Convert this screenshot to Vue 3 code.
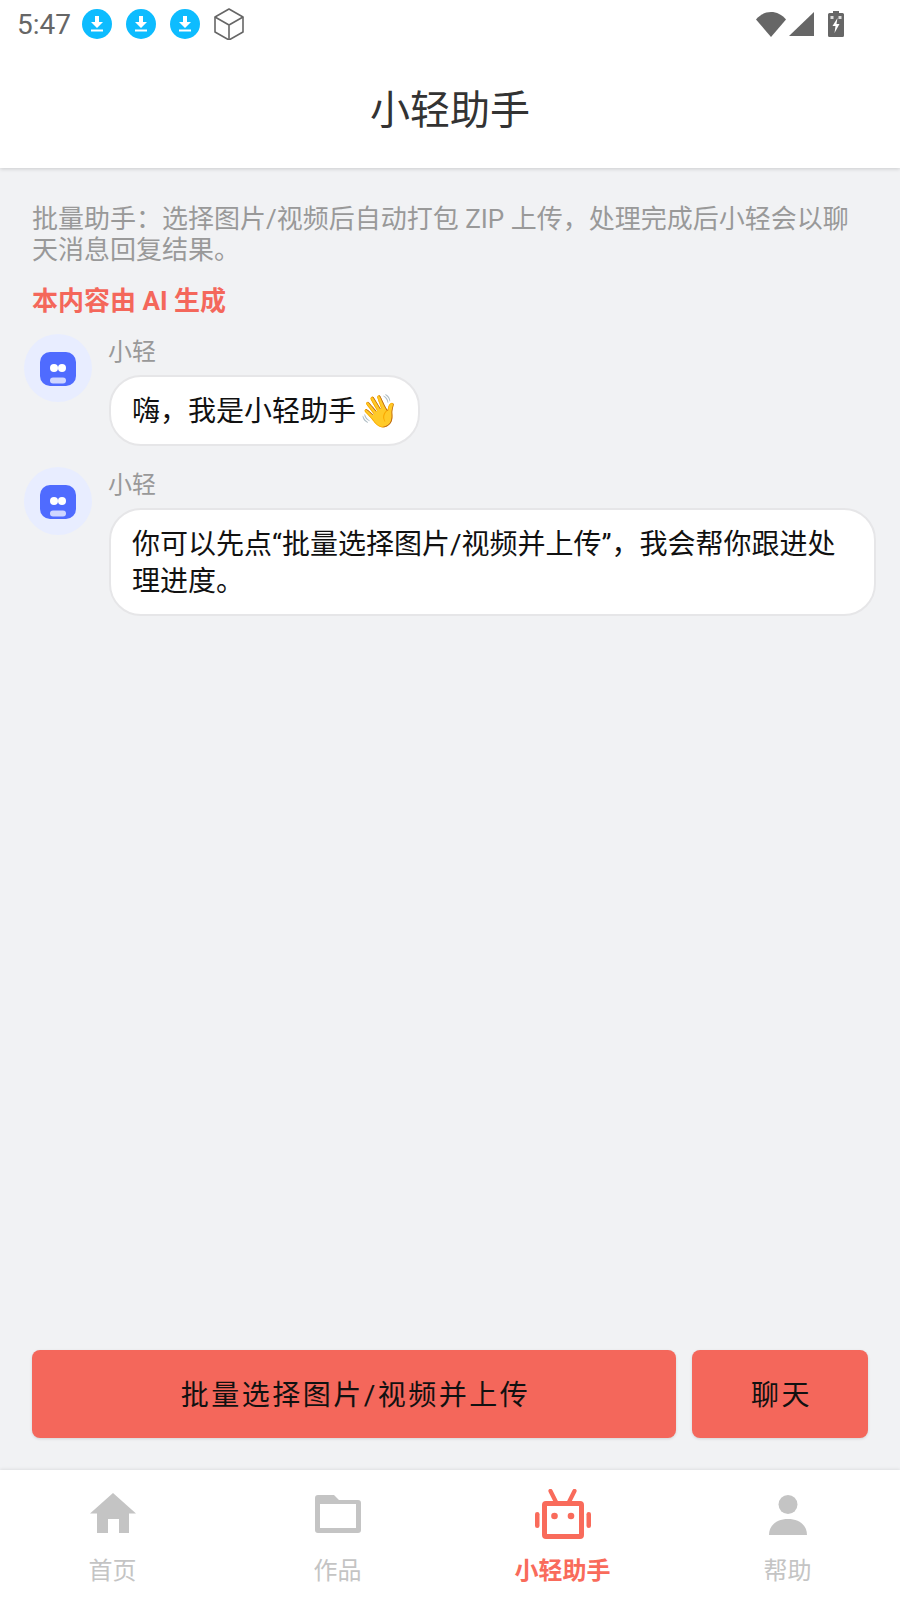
<script setup>
const messages = [
  { id: 1, text: '嗨，我是小轻助手 ', emoji: '👋' },
  { id: 2, text: '你可以先点“批量选择图片/视频并上传”，我会帮你跟进处理进度。', emoji: '' }
]
const downloads = [1, 2, 3]
</script>

<template>
  <div class="page">
    <div class="status">
      <span class="time">5:47</span>
      <svg v-for="d in downloads" :key="d" class="dl" viewBox="0 0 30 30">
        <circle cx="15" cy="15" r="15" fill="#0dbcff" />
        <path d="M13 7h4v6h4l-6 6-6-6h4z" fill="#fff" />
        <rect x="9" y="20.5" width="12" height="2" fill="#fff" />
      </svg>
      <svg class="cube" viewBox="0 0 30 32" fill="none" stroke="#666" stroke-width="1.6" stroke-linejoin="round">
        <path d="M15 1 29 9v15l-14 8-14-8V9z" />
        <path d="M1 9l14 8 14-8M15 17v15" />
      </svg>
      <span class="spacer"></span>
      <svg class="wifi" viewBox="0 0 30 25"><path d="M0 7.500C8-2.500 22-2.500 30 7.500L15 25z" fill="#666" /></svg>
      <svg class="signal" viewBox="0 0 25 24"><path d="M25 0v24H0z" fill="#666" /></svg>
      <svg class="battery" viewBox="0 0 16 26">
        <path d="M5 0h6v2h3.500a1.500 1.500 0 0 1 1.500 1.500v21a1.500 1.500 0 0 1-1.500 1.500h-13A1.500 1.500 0 0 1 0 24.500v-21A1.500 1.500 0 0 1 1.500 2H5z" fill="#666" />
        <path d="M9.500 7 4.500 15h3l-1 7 5-9h-3l1-6z" fill="#fff" />
        <rect x="2.500" y="5" width="3" height="3" fill="#ddd" />
        <rect x="10.500" y="5" width="3" height="3" fill="#ddd" />
      </svg>
    </div>

    <header class="header">小轻助手</header>

    <main class="main">
      <p class="intro">批量助手：选择图片/视频后自动打包 ZIP 上传，处理完成后小轻会以聊天消息回复结果。</p>
      <p class="notice">本内容由 AI 生成</p>

      <div class="list">
        <div v-for="m in messages" :key="m.id" class="msg">
          <div class="avatar">
            <svg viewBox="0 0 36 36" class="bot">
              <rect y="2" width="36" height="34" rx="10" fill="#4f6bff" />
              <circle cx="14" cy="18" r="4" fill="#fff" />
              <circle cx="22" cy="18" r="4" fill="#fff" />
              <rect x="10" y="27.500" width="16" height="6" rx="3" fill="#cfd6ff" />
            </svg>
          </div>
          <div class="body">
            <div class="name">小轻</div>
            <div class="bubble">{{ m.text }}<span v-if="m.emoji" class="emoji">{{ m.emoji }}</span></div>
          </div>
        </div>
      </div>

      <div class="actions">
        <button class="btn wide">批量选择图片/视频并上传</button>
        <button class="btn narrow">聊天</button>
      </div>
    </main>

    <nav class="tabs">
      <div class="tab">
        <svg class="ticon" viewBox="0 0 46 40"><path d="M23 0 46 20.500H39V40H29V26H18V40H7V20.500H0z" fill="#c4c4c4" /></svg>
        <span>首页</span>
      </div>
      <div class="tab">
        <svg class="ticon" viewBox="0 0 46 40"><path d="M3 2h16l5 5h19a3 3 0 0 1 3 3v27a3 3 0 0 1-3 3H3a3 3 0 0 1-3-3V5a3 3 0 0 1 3-3zm2 9v24h36V11z" fill="#c4c4c4" fill-rule="evenodd" /></svg>
        <span>作品</span>
      </div>
      <div class="tab active">
        <svg class="ticon" viewBox="0 0 56 50" fill="#f96b5b">
          <rect x="9.500" y="14.500" width="37" height="33" rx="1.500" fill="none" stroke="#f96b5b" stroke-width="5" />
          <path d="M15.500 2l5.500 11M39.500 2l-5.500 11" stroke="#f96b5b" stroke-width="4.200" stroke-linecap="round" fill="none" />
          <rect x="0" y="23" width="4.500" height="16" rx="2.250" />
          <rect x="51.500" y="23" width="4.500" height="16" rx="2.250" />
          <circle cx="19.500" cy="27" r="3.300" />
          <circle cx="36" cy="27" r="3.300" />
        </svg>
        <span>小轻助手</span>
      </div>
      <div class="tab">
        <svg class="ticon person" viewBox="0 0 46 40"><circle cx="23" cy="9.500" r="9.500" fill="#c4c4c4" /><path d="M4 40C4 30 12 24 23 24s19 6 19 16z" fill="#c4c4c4" /></svg>
        <span>帮助</span>
      </div>
    </nav>
  </div>
</template>

<style>
html, body { margin: 0; background: #f1f2f4; }
</style>

<style scoped>
.page {
  width: 900px;
  height: 1600px;
  display: flex;
  flex-direction: column;
  background: #f1f2f4;
  font-family: Roboto, "Noto Sans CJK SC", sans-serif;
  overflow: hidden;
}
.status {
  height: 48px;
  background: #fff;
  display: flex;
  align-items: center;
  padding: 0 56px 0 17px;
  flex: none;
  position: relative;
  z-index: 2;
}
.time {
  font-family: Roboto, sans-serif;
  font-size: 28px;
  color: #666;
  width: 65px;
}
.dl { width: 30px; height: 30px; margin-right: 14px; flex: none; }
.cube { width: 30px; height: 32px; flex: none; }
.spacer { flex: 1; }
.wifi { width: 30px; height: 25px; margin-right: 3px; }
.signal { width: 25px; height: 24px; margin-right: 14px; }
.battery { width: 16px; height: 26px; }
.header {
  height: 120px;
  flex: none;
  background: #fff;
  color: #333;
  font-size: 40px;
  line-height: 126px;
  text-align: center;
  box-shadow: 0 1px 4px rgba(0, 0, 0, .16);
  position: relative;
  z-index: 1;
}
.main {
  flex: 1;
  display: flex;
  flex-direction: column;
  padding: 36px 32px 32px;
  min-height: 0;
}
.intro {
  margin: 0;
  font-size: 26px;
  line-height: 31px;
  color: #999;
}
.notice {
  margin: 18px 0 0;
  font-size: 26px;
  line-height: 34px;
  font-weight: 700;
  color: #f4675b;
}
.list {
  flex: 1;
  display: flex;
  flex-direction: column;
  gap: 21px;
  margin: 16px -8px 0;
}
.msg { display: flex; gap: 17px; }
.avatar {
  width: 68px;
  height: 68px;
  border-radius: 50%;
  background: #e8edff;
  display: flex;
  align-items: center;
  justify-content: center;
  flex: none;
}
.bot { width: 36px; height: 36px; }
.body { flex: 1; display: flex; flex-direction: column; align-items: flex-start; gap: 5px; }
.name { font-size: 24px; line-height: 36px; color: #999; margin-left: -1px; }
.bubble {
  background: #fff;
  border: 2px solid #e6e6e8;
  border-radius: 32px;
  padding: 16px 19px 14px 21px;
  font-size: 28px;
  line-height: 37px;
  color: #111;
}
.emoji { font-size: 32px; line-height: 36px; margin-left: -4px; vertical-align: -1px; }
.actions { display: flex; gap: 16px; flex: none; }
.btn {
  height: 88px;
  border: none;
  border-radius: 8px;
  background: #f4675b;
  color: #111;
  font-family: inherit;
  font-size: 28px;
  letter-spacing: 2.500px;
  box-shadow: 0 1px 3px rgba(0, 0, 0, .12);
  padding: 0 0 3px 3px;
}
.wide { flex: 1; }
.narrow { width: 176px; flex: none; }
.tabs {
  height: 130px;
  flex: none;
  background: #fff;
  display: grid;
  grid-template-columns: repeat(4, 1fr);
  box-shadow: 0 -1px 3px rgba(0, 0, 0, .08);
  position: relative;
}
.tab {
  display: flex;
  flex-direction: column;
  align-items: center;
  color: #c4c4c4;
  font-size: 24px;
  position: relative;
  height: 130px;
}
.tab span {
  position: absolute;
  top: 84px;
  line-height: 34px;
}
.ticon { width: 46px; height: 40px; margin-top: 23px; }
.person { margin-top: 25px; }
.active { color: #f96b5b; font-weight: 700; }
.active .ticon { width: 56px; height: 50px; margin-top: 19px; }
</style>
